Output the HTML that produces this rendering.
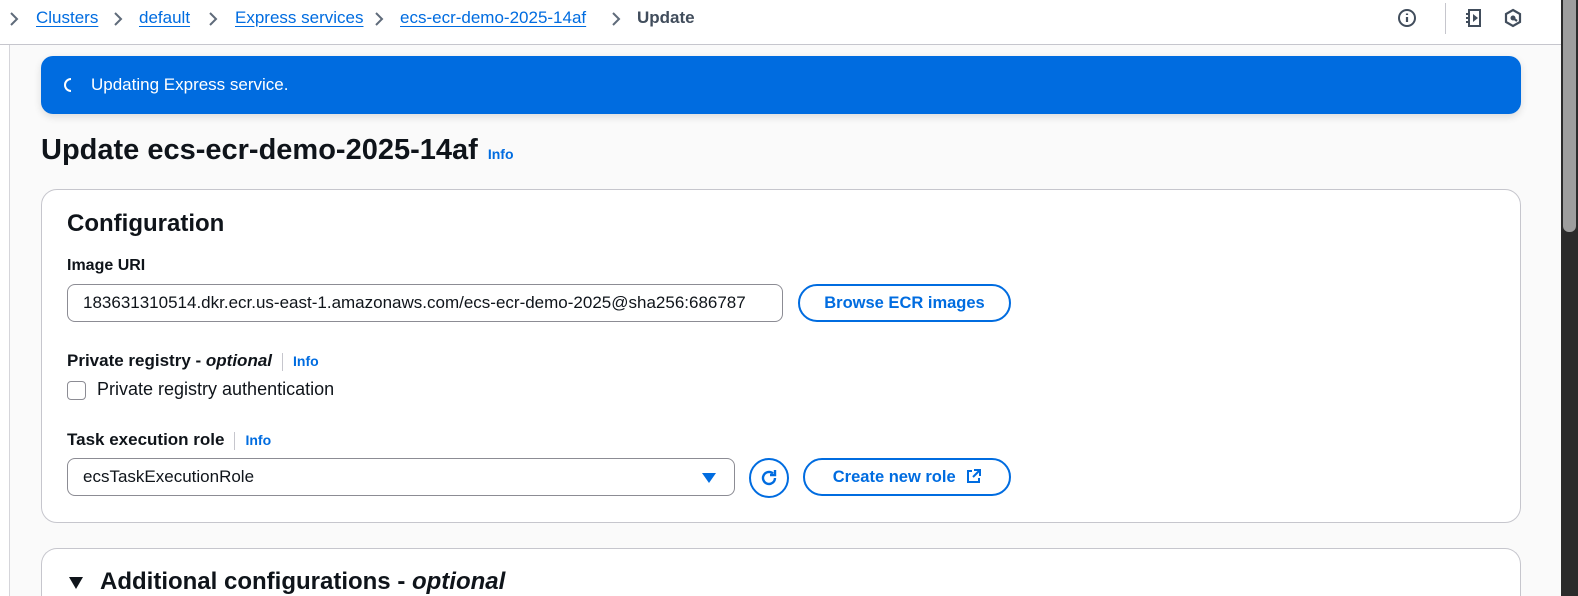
<!DOCTYPE html>
<html><head><meta charset="utf-8"><style>
*{box-sizing:border-box;margin:0;padding:0}
html,body{overflow:hidden;width:1578px;height:596px}
body{background:#fff;font-family:"Liberation Sans",sans-serif;color:#0f141a}
#wrap{position:relative;width:1578px;height:596px;overflow:hidden}
.top{position:absolute;left:0;top:0;width:1561px;height:45px;background:#fff;border-bottom:1px solid #c6c6cd}
.bc{position:absolute;top:8px;font-size:17px;line-height:20px;white-space:nowrap}
.bc a{color:#006ce0;text-decoration:underline;text-underline-offset:3px}
.chev{position:absolute;top:11px}
.content{position:absolute;left:9px;top:45px;width:1552px;height:551px;background:#fafafa;border-left:1px solid #d5d5da}
.scroll{position:absolute;left:1561px;top:0;width:17px;height:596px;background:#2b2b2b}
.thumb{position:absolute;left:1563px;top:0;width:13px;height:232px;background:#9e9e9e;border-radius:0 0 6px 6px}
.banner{position:absolute;left:41px;top:56px;width:1480px;height:58px;background:#006ce0;border-radius:12px;color:#fff;font-size:17px;box-shadow:0 3px 8px rgba(0,0,0,.12)}
.card{position:absolute;left:41px;width:1480px;background:#fff;border:1px solid #c6c6cd;border-radius:16px}
.lbl{position:absolute;font-size:16px;font-weight:bold;white-space:nowrap}
.info{color:#006ce0;font-size:14px;font-weight:bold}
.sep{display:inline-block;width:1px;height:18px;background:#c6c6cd;vertical-align:middle;margin:0 10px 0 10px}
.input{position:absolute;height:38px;border:1px solid #8c8c94;border-radius:8px;background:#fff;font-size:17px;padding:0 15px;line-height:36px;white-space:nowrap;overflow:hidden}
.btn{position:absolute;height:38px;border:2px solid #006ce0;border-radius:20px;color:#006ce0;font-weight:bold;font-size:16.5px;text-align:center;line-height:34px;background:#fff;white-space:nowrap}
</style></head><body><div id="wrap">
<div class="content"></div>
<div class="top">
<svg class="chev" style="left:8px" width="12" height="16" viewBox="0 0 12 16"><path d="M3 2l6 6-6 6" stroke="#5f6b7a" stroke-width="2" fill="none"/></svg>
<div class="bc" style="left:36px"><a>Clusters</a></div>
<svg class="chev" style="left:112px" width="12" height="16" viewBox="0 0 12 16"><path d="M3 2l6 6-6 6" stroke="#5f6b7a" stroke-width="2" fill="none"/></svg>
<div class="bc" style="left:139px"><a>default</a></div>
<svg class="chev" style="left:207px" width="12" height="16" viewBox="0 0 12 16"><path d="M3 2l6 6-6 6" stroke="#5f6b7a" stroke-width="2" fill="none"/></svg>
<div class="bc" style="left:235px"><a>Express services</a></div>
<svg class="chev" style="left:373px" width="12" height="16" viewBox="0 0 12 16"><path d="M3 2l6 6-6 6" stroke="#5f6b7a" stroke-width="2" fill="none"/></svg>
<div class="bc" style="left:400px"><a>ecs-ecr-demo-2025-14af</a></div>
<svg class="chev" style="left:610px" width="12" height="16" viewBox="0 0 12 16"><path d="M3 2l6 6-6 6" stroke="#5f6b7a" stroke-width="2" fill="none"/></svg>
<div class="bc" style="left:637px;color:#414d5c;font-weight:bold">Update</div>
<svg style="position:absolute;left:1397px;top:8px" width="20" height="20" viewBox="0 0 20 20"><circle cx="10" cy="10" r="8" stroke="#414d5c" stroke-width="2" fill="none"/><path d="M10 9v5M10 5.5v1.5" stroke="#414d5c" stroke-width="2.2"/></svg>
<div style="position:absolute;left:1445px;top:3px;width:1px;height:31px;background:#c6c6cd"></div>
<svg style="position:absolute;left:1464px;top:8px" width="20" height="20" viewBox="0 0 20 20"><path d="M5 2h11v16H5z" stroke="#414d5c" stroke-width="2" fill="none"/><path d="M2 6h4M2 10h4M2 14h4" stroke="#414d5c" stroke-width="2"/><path d="M9 6l5 4-5 4z" fill="#414d5c"/></svg>
<svg style="position:absolute;left:1503px;top:8px" width="20" height="20" viewBox="0 0 20 20"><path d="M10 2l7 4v8l-7 4-7-4V6z" stroke="#414d5c" stroke-width="2.2" fill="none"/><circle cx="10" cy="10" r="2.5" fill="#414d5c"/><path d="M10 10l4 3" stroke="#414d5c" stroke-width="2.2"/></svg>
</div>
<div class="scroll"></div><div class="thumb"></div>
<div class="banner">
<svg style="position:absolute;left:21px;top:21px" width="14" height="16" viewBox="0 0 14 16"><path d="M9 2A6 6 0 0 0 9 14" stroke="#fff" stroke-width="2" fill="none"/></svg>
<div style="position:absolute;left:50px;top:19px">Updating Express service.</div>
</div>
<div style="position:absolute;left:41px;top:133px;font-size:29px;font-weight:bold;line-height:34px;white-space:nowrap">Update ecs-ecr-demo-2025-14af <span class="info" style="font-size:14px;margin-left:2px">Info</span></div>
<div class="card" style="top:189px;height:334px">
<div style="position:absolute;left:25px;top:20px;font-size:24px;font-weight:bold">Configuration</div>
<div class="lbl" style="left:25px;top:67px">Image URI</div>
<div class="input" style="left:25px;top:94px;width:716px">183631310514.dkr.ecr.us-east-1.amazonaws.com/ecs-ecr-demo-2025@sha256:686787</div>
<div class="btn" style="left:756px;top:94px;width:213px">Browse ECR images</div>
<div class="lbl" style="left:25px;top:161px;font-size:17px">Private registry - <i>optional</i><span class="sep"></span><span class="info">Info</span></div>
<div style="position:absolute;left:25px;top:191px;width:19px;height:19px;border:1.5px solid #8c8c94;border-radius:4px"></div>
<div style="position:absolute;left:55px;top:189px;font-size:18px">Private registry authentication</div>
<div class="lbl" style="left:25px;top:240px;font-size:17px">Task execution role<span class="sep"></span><span class="info">Info</span></div>
<div class="input" style="left:25px;top:268px;width:668px">ecsTaskExecutionRole</div>
<svg style="position:absolute;left:659px;top:282px" width="16" height="12" viewBox="0 0 16 12"><path d="M1 1h14L8 11z" fill="#006ce0"/></svg>
<div style="position:absolute;left:707px;top:268px;width:40px;height:40px;border:2px solid #006ce0;border-radius:50%"></div>
<svg style="position:absolute;left:716px;top:277px" width="22" height="22" viewBox="0 0 22 22"><path d="M17 11a6 6 0 1 1-2-4.5" stroke="#006ce0" stroke-width="2.4" fill="none"/><path d="M17 3v5h-5" stroke="#006ce0" stroke-width="2.4" fill="none"/></svg>
<div class="btn" style="left:761px;top:268px;width:208px">Create new role <svg style="vertical-align:-2px;margin-left:6px" width="15" height="15" viewBox="0 0 15 15"><path d="M6 2H2v11h11V9" stroke="#006ce0" stroke-width="2" fill="none"/><path d="M8 1h6v6M14 1L7 8" stroke="#006ce0" stroke-width="2" fill="none"/></svg></div>
</div>
<div class="card" style="top:548px;height:48px;border-bottom:none;border-radius:16px 16px 0 0">
<svg style="position:absolute;left:26px;top:27px" width="16" height="14" viewBox="0 0 16 14"><path d="M1 1h14L8 13z" fill="#0f141a"/></svg>
<div style="position:absolute;left:58px;top:19px;font-size:24px;font-weight:bold;white-space:nowrap">Additional configurations - <i>optional</i></div>
</div>
</div></body></html>
